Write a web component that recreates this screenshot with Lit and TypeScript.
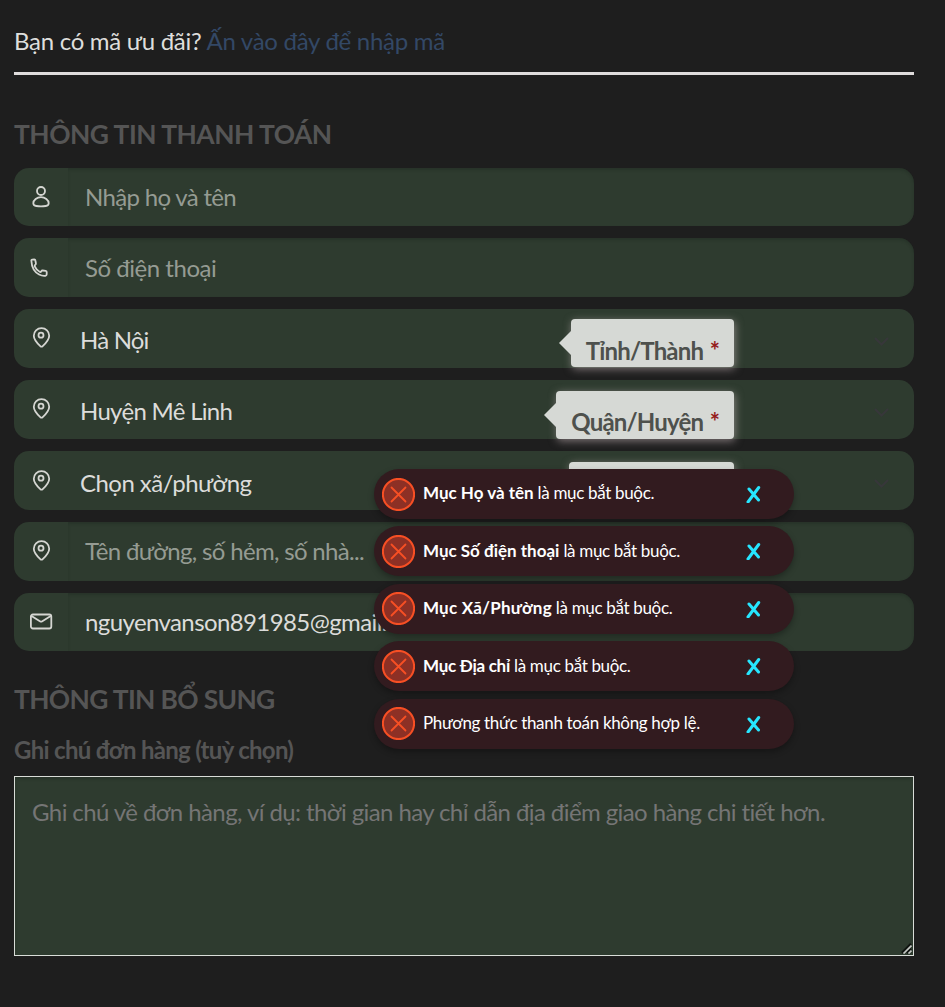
import { LitElement, html, svg, css } from "lit";
import { customElement } from "lit/decorators.js";
import { classMap } from "lit/directives/class-map.js";

const icons: Record<string, unknown> = {
  user: svg`<circle cx="9" cy="5" r="4"/><path d="M9 11.200c-4 0-7.700 2.800-7.700 6.100 0 1.500 1.200 2.400 3 2.700 3 .5 6.400.5 9.400 0 1.800-.3 3-1.200 3-2.700 0-3.300-3.700-6.100-7.700-6.100z"/>`,
  phone: svg`<path d="M2 2.500c-.3-.9.1-1.200.9-1.300l2-.2c.7 0 1 .3 1.100 1l.5 3c.1.6-.1 1-.6 1.300-.7.5-.8 1-.4 1.900 1 2.300 2.500 4 4.700 5.100.8.400 1.300.2 1.700-.5.3-.6.7-.9 1.400-.8l3 .4c.7.100 1 .4 1 1.100v2.300c0 .9-.4 1.300-1.300 1.500-2.100.3-4.200-.2-6.300-1.300C4.500 13.300 2.300 8.700 2 2.500z" transform="translate(-2.600 2.500)"/>`,
  pin: svg`<path d="M9.500 1.200c-4.300 0-7.700 3.300-7.700 7.500 0 4.300 4.600 8.600 6.600 10.500.8.700 1.400.7 2.200 0 2-1.900 6.600-6.200 6.600-10.500 0-4.200-3.400-7.500-7.700-7.500z"/><circle cx="9" cy="8.200" r="2.500"/>`,
  mail: svg`<rect x="-1.100" y="3.500" width="20.400" height="14" rx="2"/><path d="M-.5 5l8.800 5.500q.8.400 1.600 0l8.800-5.500"/>`,
};

interface Field { icon: string; text: string; kind: string; tip?: string; }

const fields: Field[] = [
  { icon: "user", text: "Nhập họ và tên", kind: "hint first" },
  { icon: "phone", text: "Số điện thoại", kind: "hint phone" },
  { icon: "pin", text: "Hà Nội", kind: "select city", tip: "Tỉnh/Thành" },
  { icon: "pin", text: "Huyện Mê Linh", kind: "select second", tip: "Quận/Huyện" },
  { icon: "pin", text: "Chọn xã/phường", kind: "select third", tip: "" },
  { icon: "pin", text: "Tên đường, số hẻm, số nhà...", kind: "hint street" },
  { icon: "mail", text: "nguyenvanson891985@gmail.com", kind: "filled last" },
];

const errors: [string, string, string][] = [
  ["Mục Họ và tên", " là mục bắt buộc.", ""],
  ["Mục Số điện thoại", " là mục bắt buộc.", ""],
  ["Mục Xã/Phường", " là mục bắt buộc.", "wide"],
  ["Mục Địa chỉ", " là mục bắt buộc.", "narrow"],
  ["", "Phương thức thanh toán không hợp lệ.", ""],
];

@customElement("form-field")
class FormField extends LitElement {
  static properties = { field: { attribute: false } };
  declare field: Field;
  static styles = css`
    :host { display: block; }
    .row { position: relative; height: 59px; border-radius: 15px; background: #2e3b2f; display: flex; align-items: flex-start; box-sizing: border-box; font-size: 24px; line-height: 30px; letter-spacing: -.67px; white-space: nowrap; color: #dcdcda; }
    .first, .last { height: 58px; }
    .phone { letter-spacing: -.47px; }
    .city { letter-spacing: -.8px; }
    .second { letter-spacing: -.7px; }
    .third { letter-spacing: -.55px; }
    .last { letter-spacing: -.6px; }
    .cell { width: 54px; height: 100%; flex: none; box-sizing: border-box; padding: 18px 0 0 18px; }
    .third .cell { padding-top: 19px; }
    .cell svg { display: block; overflow: visible; fill: none; stroke: #d5d6d2; stroke-width: 1.800; stroke-linejoin: round; stroke-linecap: round; }
    .value { flex: 1; height: 100%; box-sizing: border-box; padding: 14px 0 0 17px; border-radius: 0 15px 15px 0; }
    .hint .value, .filled .value { box-shadow: inset 0 2px 3px rgba(20, 34, 24, .28); }
    .hint .value { color: #959b93; }
    .phone .value { padding-top: 15px; }
    .select .value { padding: 16px 0 0 12px; }
    .third .value { padding-top: 17px; }
    .arrow { position: absolute; right: 25px; top: 28px; fill: none; stroke: #37373a; stroke-width: 2; }
    .tip { position: absolute; right: 180px; top: 10px; height: 48px; box-sizing: border-box; padding: 17px 15px 0; border-radius: 4px; background: #d6d9d5; color: #4e514d; font-weight: 700; letter-spacing: -.83px; box-shadow: 1px 2px 8px rgba(225, 205, 210, .5); }
    .second .tip, .third .tip { top: 11px; padding-top: 16px; }
    .third .tip { width: 165px; }
    .tip::before { content: ""; position: absolute; left: -12px; top: 12px; border: 12px solid transparent; border-left: 0; border-right-color: #d6d9d5; }
    .req { color: #951c1c; margin-left: 1.500px; }
  `;
  render() {
    const f = this.field;
    const kinds = Object.fromEntries(f.kind.split(" ").map((k) => [k, true]));
    return html`<div class=${classMap({ row: true, ...kinds })}>
      <div class="cell"><svg width="18" height="21" viewBox="0 0 18 21">${icons[f.icon]}</svg></div>
      <div class="value">${f.text}</div>
      ${f.tip !== undefined ? html`<svg class="arrow" width="15" height="9" viewBox="0 0 15 9"><path d="M1 1l6.500 6.500L14 1"/></svg>
        <div class="tip">${f.tip ? html`${f.tip} <span class="req">*</span>` : ""}</div>` : ""}
    </div>`;
  }
}

@customElement("app-root")
class AppRoot extends LitElement {
  static styles = css`
    :host { display: block; position: relative; box-sizing: border-box; width: 945px; height: 1007px; overflow: hidden; background: #1e1e1e; color: #dededc; font: 24px/30px Lato, "Noto Sans", sans-serif; padding: 26px 31px 0 14px; white-space: nowrap; }
    .coupon { height: 49px; box-sizing: border-box; border-bottom: 3px solid #dfdcdc; letter-spacing: -.28px; }
    .link { color: #334866; }
    .title { margin: 42px 0 0; height: 51px; font-size: 26.400px; line-height: 34px; font-weight: 700; letter-spacing: -.5px; color: #555; }
    .fields { display: flex; flex-direction: column; gap: 12px; }
    .extra { margin-top: 31px; height: 53px; letter-spacing: -.65px; }
    .label { height: 41px; font-weight: 700; letter-spacing: -.7px; color: #555; }
    .notes { position: relative; height: 180px; box-sizing: border-box; border: 1px solid #d9ddd8; background: #2e3b2f; color: #757575; padding: 20px 17px; letter-spacing: -.59px; box-shadow: inset 0 2px 3px rgba(20, 34, 24, .28); }
    .grip { position: absolute; right: 1px; bottom: 1px; }
    .toasts { position: absolute; left: 374px; top: 469px; width: 420px; display: flex; flex-direction: column; gap: 7.400px; color: #fff; font-size: 17px; line-height: 22px; }
    .toast { height: 50px; box-sizing: border-box; border-radius: 25px; background: #321b1f; display: flex; align-items: center; padding: 0 33px 0 8px; box-shadow: 0 3px 6px rgba(0, 0, 0, .3); }
    .msg { flex: 1; margin: -1.200px 0 0 8px; letter-spacing: -.33px; }
    .msg b { letter-spacing: 0; }
    .wide b { letter-spacing: .22px; }
    .narrow b { letter-spacing: -.27px; }
    .close { fill: none; stroke: #26e6ff; stroke-width: 3; stroke-linecap: round; }
  `;
  render() {
    return html`
      <div class="coupon">Bạn có mã ưu đãi? <span class="link">Ấn vào đây để nhập mã</span></div>
      <div class="title">THÔNG TIN THANH TOÁN</div>
      <div class="fields">${fields.map((f) => html`<form-field .field=${f}></form-field>`)}</div>
      <div class="title extra">THÔNG TIN BỔ SUNG</div>
      <div class="label">Ghi chú đơn hàng (tuỳ chọn)</div>
      <div class="notes">Ghi chú về đơn hàng, ví dụ: thời gian hay chỉ dẫn địa điểm giao hàng chi tiết hơn.
        <svg class="grip" width="11" height="11" viewBox="0 0 11 11" fill="none"><path d="M1 10L10 1M6 10l4-4" stroke="#101411" stroke-width="2.500"/><path d="M2.500 10.500l8-8M7.500 10.500l3-3" stroke="#c5c8c4" stroke-width="1.700"/></svg>
      </div>
      <div class="toasts">${errors.map(([name, rest, fit]) => html`<div class="toast">
        <svg width="33" height="33" viewBox="0 0 33 33" fill="none" stroke="#f74f24"><circle cx="16.500" cy="16.500" r="15.600" fill="#8d3025" stroke-width="2"/><path d="M9.500 9.500l14 14M23.500 9.500l-14 14" stroke-width="1.800" stroke-linecap="round"/></svg>
        <div class="msg ${fit}"><b>${name}</b>${rest}</div>
        <svg class="close" width="15" height="18" viewBox="0 0 15 18"><path d="M3 4l9.500 11M12.700 2.500L2 17"/></svg>
      </div>`)}</div>`;
  }
}
